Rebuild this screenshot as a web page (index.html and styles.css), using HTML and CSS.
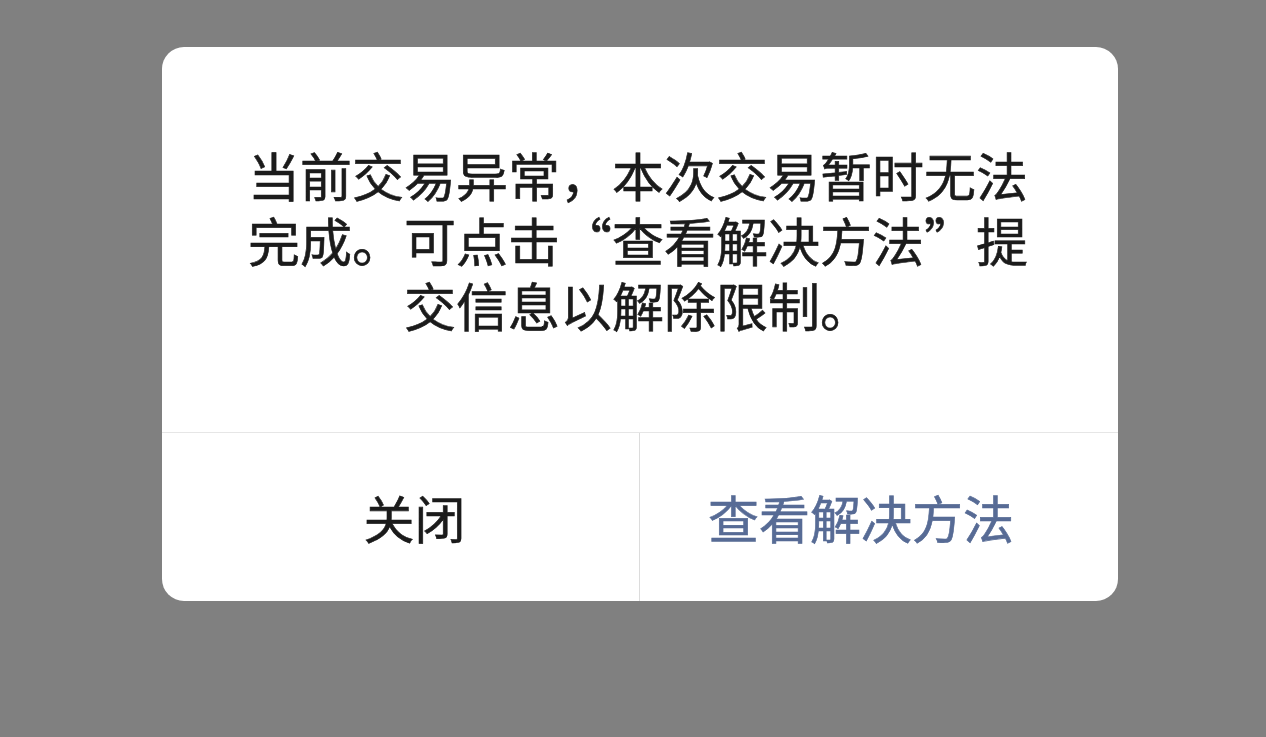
FILE: index.html
```html
<!DOCTYPE html>
<html lang="zh-CN">
<head>
<meta charset="utf-8">
<title>交易异常</title>
<link rel="stylesheet" href="styles.css">
</head>
<body>
<div class="page">
  <div class="dialog">
    <div class="dialog-body">
      <p class="message">当前交易异常，本次交易暂时无法完成。可点击“查看解决方法”提交信息以解除限制。</p>
    </div>
    <div class="dialog-actions">
      <button class="btn btn-close" type="button">关闭</button>
      <button class="btn btn-primary" type="button">查看解决方法</button>
    </div>
  </div>
</div>
</body>
</html>
```

FILE: styles.css
```css
html, body {
  margin: 0;
  padding: 0;
  height: 100%;
}
body {
  background: #808080;
  font-family: "Noto Sans CJK SC", "Noto Sans", sans-serif;
  overflow: hidden;
}
.page {
  padding: 47px 0 0 162px;
}
.dialog {
  width: 956px;
  background: #ffffff;
  border-radius: 22px;
  overflow: hidden;
}
.dialog-body {
  height: 385px;
  box-sizing: border-box;
  padding: 95px 80px 0 76px;
}
.message {
  margin: 0;
  font-size: 52px;
  line-height: 65px;
  color: #1b1b1b;
  text-align: center;
  font-weight: 400;
  -webkit-text-stroke: 0.6px #1b1b1b;
}
.dialog-actions {
  display: grid;
  grid-template-columns: 1fr 1fr;
  height: 168px;
  border-top: 1px solid #e6e6e6;
}
.btn {
  border: 0;
  margin: 0;
  background: transparent;
  font-family: inherit;
  font-size: 51px;
  font-weight: 400;
  padding: 0;
  cursor: pointer;
}
.btn-close {
  color: #1b1b1b;
  padding-left: 28px;
  border-right: 1px solid #dcdcdc;
  -webkit-text-stroke: 0.6px #1b1b1b;
}
.btn-primary {
  color: #576b95;
  padding-right: 36px;
  -webkit-text-stroke: 0.6px #576b95;
}
```
